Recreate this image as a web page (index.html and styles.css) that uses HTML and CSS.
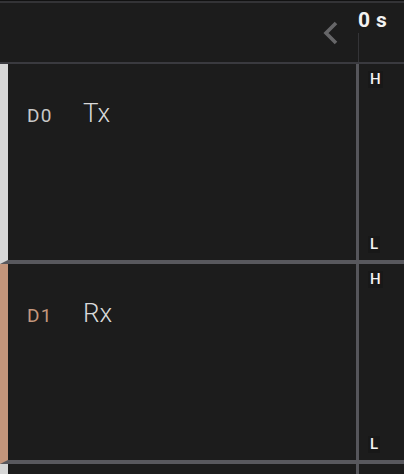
FILE: index.html
```html
<!DOCTYPE html>
<html>
<head>
<meta charset="utf-8">
<link rel="stylesheet" href="styles.css">
</head>
<body>
<div class="app">
  <div class="topline"></div>
  <div class="header">
    <div class="header-left">
      <svg class="chevron" width="16" height="24" viewBox="0 0 16 24">
        <polyline points="13,2 3,12 13,22" fill="none" stroke="#666668" stroke-width="3.6" stroke-linecap="butt" stroke-linejoin="miter"/>
      </svg>
    </div>
    <div class="header-right">
      <div class="time">0 s</div>
      <div class="tick"></div>
    </div>
  </div>

  <div class="row row-d0">
    <div class="content">
      <span class="chan">D0</span>
      <span class="name">Tx</span>
    </div>
    <div class="vline"></div>
    <div class="levels">
      <span class="lvl">H</span>
      <span class="lvl">L</span>
    </div>
  </div>

  <div class="row row-d1">
    <div class="content">
      <span class="chan">D1</span>
      <span class="name">Rx</span>
    </div>
    <div class="vline"></div>
    <div class="levels">
      <span class="lvl">H</span>
      <span class="lvl">L</span>
    </div>
  </div>

  <div class="row row-d2">
    <div class="content"></div>
    <div class="vline"></div>
    <div class="levels"></div>
  </div>
</div>
</body>
</html>
```

FILE: styles.css
```css
html, body {
  margin: 0;
  padding: 0;
  background: #1c1c1c;
  overflow: hidden;
}

.app {
  width: 404px;
  height: 474px;
  overflow: hidden;
  font-family: Roboto, "Liberation Sans", sans-serif;
  background: #1c1c1c;
}

.topline {
  height: 1px;
  background: #111111;
  border-bottom: 2px solid #333336;
}

.header {
  height: 59px;
  display: grid;
  grid-template-columns: 358px 1fr;
  border-bottom: 2px solid #3a3a3f;
}

.header-left {
  display: flex;
  justify-content: flex-end;
  align-items: center;
  padding-right: 19px;
  padding-top: 1px;
}

.chevron {
  display: block;
}

.header-right {
  display: flex;
  flex-direction: column;
  padding-top: 5px;
}

.time {
  color: #f2f2f2;
  font-weight: 700;
  font-size: 21px;
  line-height: 24.6px;
  white-space: nowrap;
  letter-spacing: 0.4px;
}

.tick {
  width: 1px;
  flex: 1;
  background: #343437;
}

.row {
  height: 196px;
  display: grid;
  grid-template-columns: 348px 3px 1fr;
  border-left: 8px solid #d6d6d6;
  border-bottom: 4px solid #58585d;
}

.row-d1 {
  border-left-color: #c3957b;
}

.row-d1 .chan {
  color: #c4977d;
}

.content {
  display: flex;
  align-items: baseline;
  padding-left: 19px;
  padding-top: 34px;
  height: 30px;
}

.chan {
  width: 56px;
  color: #c8c8c8;
  font-size: 19px;
  font-weight: 400;
  letter-spacing: 1.2px;
}

.name {
  color: #d9d9d9;
  font-size: 26px;
  font-weight: 300;
}

.vline {
  background: #56565b;
}

.levels {
  display: flex;
  flex-direction: column;
  justify-content: space-between;
  align-items: flex-start;
  padding: 7px 0 7px 9px;
}

.lvl {
  color: #f4f4f4;
  font-size: 15px;
  font-weight: 500;
  line-height: 17px;
  background: #181818;
  padding: 0 2px;
}
```
